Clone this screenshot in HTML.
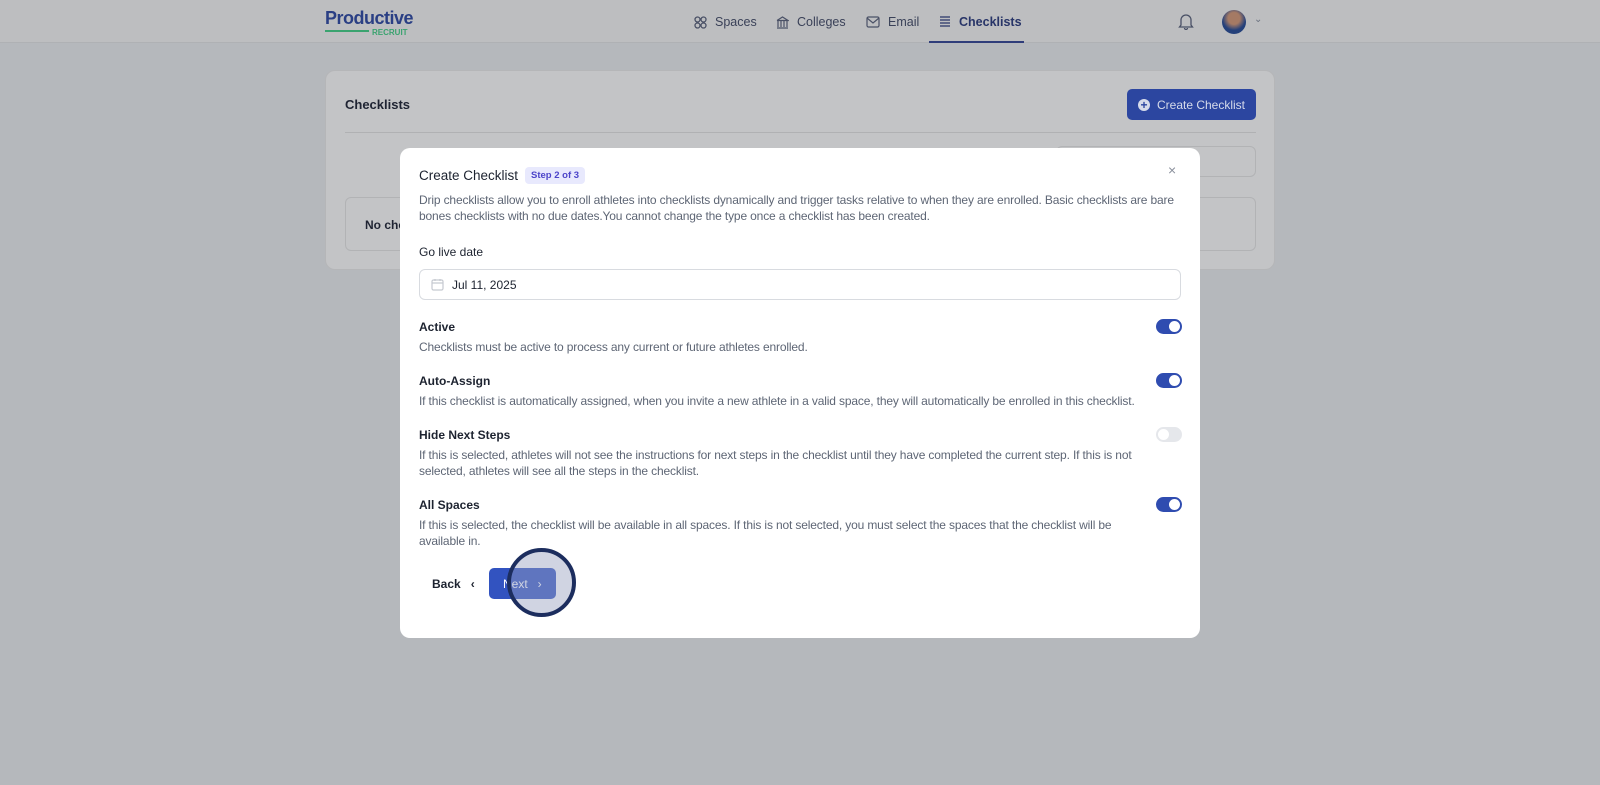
<!DOCTYPE html>
<html><head><meta charset="utf-8"><style>
*{box-sizing:border-box;margin:0;padding:0}
body{width:1600px;height:785px;overflow:hidden;background:#b5b8bc;font-family:"Liberation Sans",sans-serif;position:relative}
.hdr{position:absolute;left:0;top:0;width:1600px;height:43px;background:#bdbec0;border-bottom:1px solid #afb1b4}
.logo{position:absolute;left:325px;top:8px;font-weight:bold;font-size:18px;color:#2a3f84;letter-spacing:-0.5px}
.logo2{position:absolute;left:325px;top:28px;width:90px;height:8px}
.nav{position:absolute;top:15px;font-size:12.5px;color:#3a4158;display:flex;align-items:center;gap:8px}
.card{position:absolute;left:325px;top:70px;width:950px;height:200px;background:#c3c4c6;border:1px solid #b5b6b8;border-radius:10px}
.modal{position:absolute;left:400px;top:148px;width:800px;height:490px;background:#fff;border-radius:10px}
.t{position:absolute;font-size:12px;color:#5e6675;line-height:16px;letter-spacing:-0.15px}
.lbl{position:absolute;left:19px;font-size:12px;color:#1d2330;font-weight:bold}
.tg{position:absolute;left:756px;width:26px;height:15px;border-radius:8px;background:#2f4cb0}
.tg::after{content:"";position:absolute;right:2px;top:2px;width:11px;height:11px;border-radius:50%;background:#fff}
.tg.off{background:#e5e7eb}.tg.off::after{left:2px;right:auto}
</style></head><body>
<div class="hdr">
<div class="logo">Productive</div>
<svg class="logo2" viewBox="0 0 90 8"><line x1="0" y1="3" x2="44" y2="3" stroke="#3aa36f" stroke-width="2"/><text x="47" y="7" font-size="8" font-weight="bold" fill="#3aa36f" font-family="Liberation Sans">RECRUIT</text></svg>
<div class="nav" style="left:694px"><svg width="13" height="13" fill="none" stroke="#4a5166" stroke-width="1.3"><circle cx="3.5" cy="3.5" r="2.5"/><circle cx="9.5" cy="3.5" r="2.5"/><circle cx="3.5" cy="9.5" r="2.5"/><circle cx="9.5" cy="9.5" r="2.5"/></svg>Spaces</div>
<div class="nav" style="left:776px"><svg width="13" height="13" fill="none" stroke="#4a5166" stroke-width="1.2"><path d="M1 4.5L6.5 1 12 4.5H1M2 5v6M5 5v6M8 5v6M11 5v6M1 12h11"/></svg>Colleges</div>
<div class="nav" style="left:866px"><svg width="14" height="12" fill="none" stroke="#4a5166" stroke-width="1.2"><rect x="1" y="1" width="12" height="10" rx="1.5"/><path d="M1 2l6 5 6-5"/></svg>Email</div>
<div class="nav" style="left:939px;font-weight:bold;color:#283568"><svg width="12" height="12" fill="none" stroke="#283568" stroke-width="1.2"><path d="M1 1h10M1 4h10M1 7h10M1 10h10"/></svg>Checklists</div>
<div style="position:absolute;left:929px;top:41px;width:95px;height:2px;background:#2f3d7a"></div>
<svg style="position:absolute;left:1178px;top:13px" width="16" height="17" fill="none" stroke="#4a5166" stroke-width="1.3"><path d="M3 12V7a5 5 0 0110 0v5l1.5 2h-13zM6.5 15a1.5 1.5 0 003 0"/></svg>
<div style="position:absolute;left:1222px;top:10px;width:24px;height:24px;border-radius:50%;background:radial-gradient(circle at 50% 35%,#a57a64 30%,#24407a 60%)"></div>
<div style="position:absolute;left:1254px;top:14px;font-size:10px;color:#6b7280">⌄</div>
</div>
<div class="card">
<div style="position:absolute;left:19px;top:26px;font-size:13px;font-weight:bold;color:#1f2433">Checklists</div>
<div style="position:absolute;left:801px;top:18px;width:129px;height:31px;background:#2c46a0;border-radius:5px;color:#d6dbea;font-size:12px;display:flex;align-items:center;justify-content:center;gap:7px"><span style="width:12px;height:12px;border-radius:50%;background:#d6dbea;color:#2c46a0;font-size:12px;line-height:12px;text-align:center;font-weight:bold">+</span>Create Checklist</div>
<div style="position:absolute;left:19px;top:61px;width:911px;height:1px;background:#b0b1b3"></div>
<div style="position:absolute;left:730px;top:75px;width:200px;height:31px;border:1px solid #b2b3b5;border-radius:6px"></div>
<div style="position:absolute;left:19px;top:126px;width:911px;height:54px;border:1px solid #b2b3b5;border-radius:6px;font-size:12px;font-weight:bold;color:#1f2433;padding:20px 19px">No che</div>
</div>
<div class="modal">
<div style="position:absolute;left:19px;top:20px;font-size:13.5px;color:#1d2330">Create Checklist</div>
<div style="position:absolute;left:125px;top:19px;padding:3px 6px;background:#e8e9fd;color:#4c44c9;font-size:9.5px;font-weight:bold;border-radius:4px">Step 2 of 3</div>
<div style="position:absolute;left:768px;top:14px;font-size:14px;color:#8a909c">×</div>
<div class="t" style="left:19px;top:44px;width:775px">Drip checklists allow you to enroll athletes into checklists dynamically and trigger tasks relative to when they are enrolled. Basic checklists are bare bones checklists with no due dates.You cannot change the type once a checklist has been created.</div>
<div class="lbl" style="top:97px;font-weight:normal;color:#1d2330">Go live date</div>
<div style="position:absolute;left:19px;top:121px;width:762px;height:31px;border:1px solid #d8dbe0;border-radius:6px"></div>
<svg style="position:absolute;left:31px;top:130px" width="13" height="13" fill="none" stroke="#c5c9d0" stroke-width="1.2"><rect x="1" y="2" width="11" height="10" rx="1.5"/><path d="M1 5h11M4 1v2M9 1v2"/></svg>
<div style="position:absolute;left:52px;top:130px;font-size:12px;color:#1d2330">Jul 11, 2025</div>
<div class="lbl" style="top:172px">Active</div>
<div class="t" style="left:19px;top:191px">Checklists must be active to process any current or future athletes enrolled.</div>
<div class="tg" style="top:171px"></div>
<div class="lbl" style="top:226px">Auto-Assign</div>
<div class="t" style="left:19px;top:245px">If this checklist is automatically assigned, when you invite a new athlete in a valid space, they will automatically be enrolled in this checklist.</div>
<div class="tg" style="top:225px"></div>
<div class="lbl" style="top:280px">Hide Next Steps</div>
<div class="t" style="left:19px;top:299px;width:730px">If this is selected, athletes will not see the instructions for next steps in the checklist until they have completed the current step. If this is not selected, athletes will see all the steps in the checklist.</div>
<div class="tg off" style="top:279px"></div>
<div class="lbl" style="top:350px">All Spaces</div>
<div class="t" style="left:19px;top:369px;width:730px">If this is selected, the checklist will be available in all spaces. If this is not selected, you must select the spaces that the checklist will be available in.</div>
<div class="tg" style="top:349px"></div>
<div style="position:absolute;left:32px;top:429px;font-size:12px;font-weight:bold;color:#1d2330">Back &nbsp;&nbsp;‹</div>
<div style="position:absolute;left:89px;top:420px;width:67px;height:31px;background:#3253c0;border-radius:5px;color:#fff;font-size:12px;padding:9px 0 0 14px">Next &nbsp;&nbsp;›</div>
<div style="position:absolute;left:107px;top:400px;width:69px;height:69px;border-radius:50%;border:4px solid #1c2d5e;background:rgba(150,160,190,0.45)"></div>
</div>
</body></html>
